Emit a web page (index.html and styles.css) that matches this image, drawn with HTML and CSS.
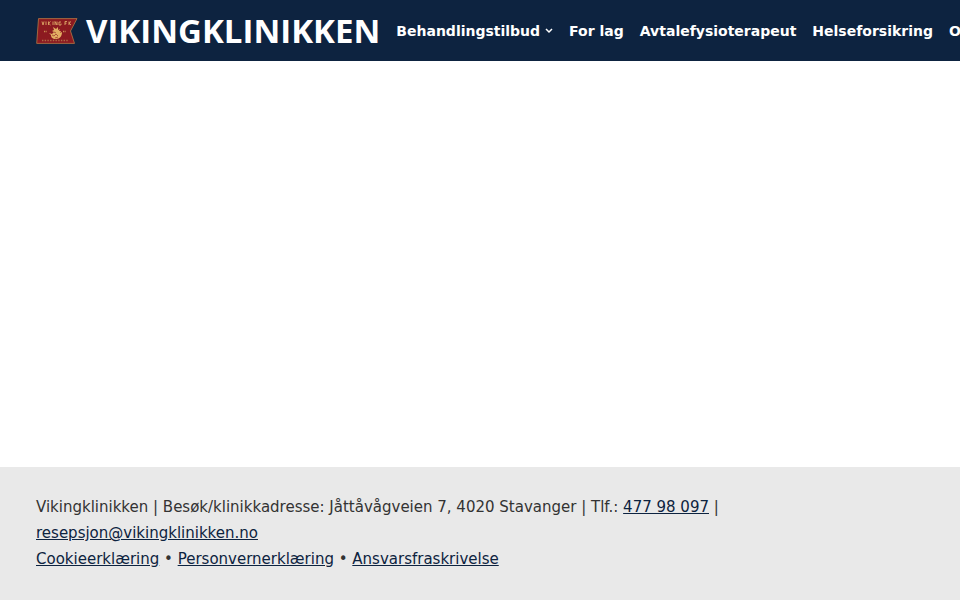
FILE: index.html
```html
<!DOCTYPE html>
<html lang="no">
<head>
    <meta charset="UTF-8">
    <meta name="viewport" content="width=device-width, initial-scale=1.0">
    <title>Vikingklinikken</title>
    <link rel="stylesheet" href="styles.css">
</head>
<body>
    <header class="header">
        <a class="brand" href="#">
            <svg class="brand-logo" viewBox="0 0 42 26" aria-hidden="true">
                <path d="M2.500 .6H41l-6.500 12.400 4 12.400H.7z" fill="#8c1a20" stroke="#b57a45" stroke-width=".8"/>
                <!-- top lettering -->
                <path d="M6 3.500l1 3.500 1-3.500M10 3.500V7M12.500 3.500V7m2-3.500l-2 1.700 2 1.800M17 3.500V7M19 7V3.500L21 7V3.500M25 4h-2v3h2V5.500M29 7V3.500h2M29 5.200h1.500M33 3.500V7m2-3.500l-2 1.700 2 1.800" fill="none" stroke="#dca766" stroke-width=".9"/>
                <!-- ship -->
                <path d="M13 15l3 1 2-2-2-1 2-1-1-3 3 2 2-2v3l2-1-1 2h2l-1 2 2-1c0 4-2 7-6 7s-5-2-5-4z" fill="#e3ae62"/>
                <path d="M16 17l2 1 2-2 2 2M18 14l2 1M19 20l3-1" fill="none" stroke="#8c1a20" stroke-width=".6"/>
                <path d="M8 13.500h3M27 13.500h3" stroke="#c98a50" stroke-width="1.400" stroke-dasharray="1 .6"/>
                <path d="M6 22.500h26" stroke="#b06a45" stroke-width="1.600" stroke-dasharray="1.400 1.300"/>
            </svg>
            <span class="brand-name">VIKINGKLINIKKEN</span>
        </a>
        <nav class="nav">
            <a href="#">Behandlingstilbud
                <svg class="chevron" viewBox="0 0 8 6" aria-hidden="true"><path d="M1 1l3 3 3-3"/></svg>
            </a>
            <a href="#">For lag</a>
            <a href="#">Avtalefysioterapeut</a>
            <a href="#">Helseforsikring</a>
            <a href="#">Om oss</a>
        </nav>
    </header>

    <main class="content"></main>

    <footer class="footer">
        <p>
            Vikingklinikken | Besøk/klinikkadresse: Jåttåvågveien 7, 4020 Stavanger | Tlf.: <a href="tel:47798097">477 98 097</a> |
            <a href="mailto:resepsjon@vikingklinikken.no">resepsjon@vikingklinikken.no</a>
        </p>
        <p>
            <a href="#">Cookieerklæring</a> • <a href="#">Personvernerklæring</a> • <a href="#">Ansvarsfraskrivelse</a>
        </p>
    </footer>
</body>
</html>
```

FILE: styles.css
```css
* {
    box-sizing: border-box;
}
body {
    margin: 0;
    min-height: 100vh;
    display: flex;
    flex-direction: column;
    overflow-x: hidden;
    background: #fff;
    color: #333;
    font-family: "DejaVu Sans", sans-serif;
    font-size: 15px;
}
.header {
    display: flex;
    align-items: center;
    gap: 16px;
    padding: 6px 36px;
    background: #0d2340;
    overflow: hidden;
}
.brand {
    display: flex;
    flex-shrink: 0;
    align-items: center;
    gap: 8px;
    color: #fff;
    text-decoration: none;
}
.brand-logo {
    width: 42px;
    height: 26px;
}
.brand-name {
    font-family: "Open Sans", sans-serif;
    font-size: 33px;
    font-weight: 700;
    line-height: 49px;
}
.nav {
    display: flex;
    flex-shrink: 0;
    gap: 16px;
}
.nav a {
    display: flex;
    align-items: center;
    gap: 5px;
    color: #fff;
    font-size: 14px;
    font-weight: 700;
    text-decoration: none;
    white-space: nowrap;
}
.chevron {
    width: 8px;
    height: 6px;
    fill: none;
    stroke: #fff;
    stroke-width: 1.5;
}
.content {
    flex: 1;
}
.footer {
    padding: 27px 36px 28px;
    background: #e9e9e9;
    line-height: 26px;
}
.footer p {
    margin: 0;
}
.footer a {
    color: #0d2340;
}
```
